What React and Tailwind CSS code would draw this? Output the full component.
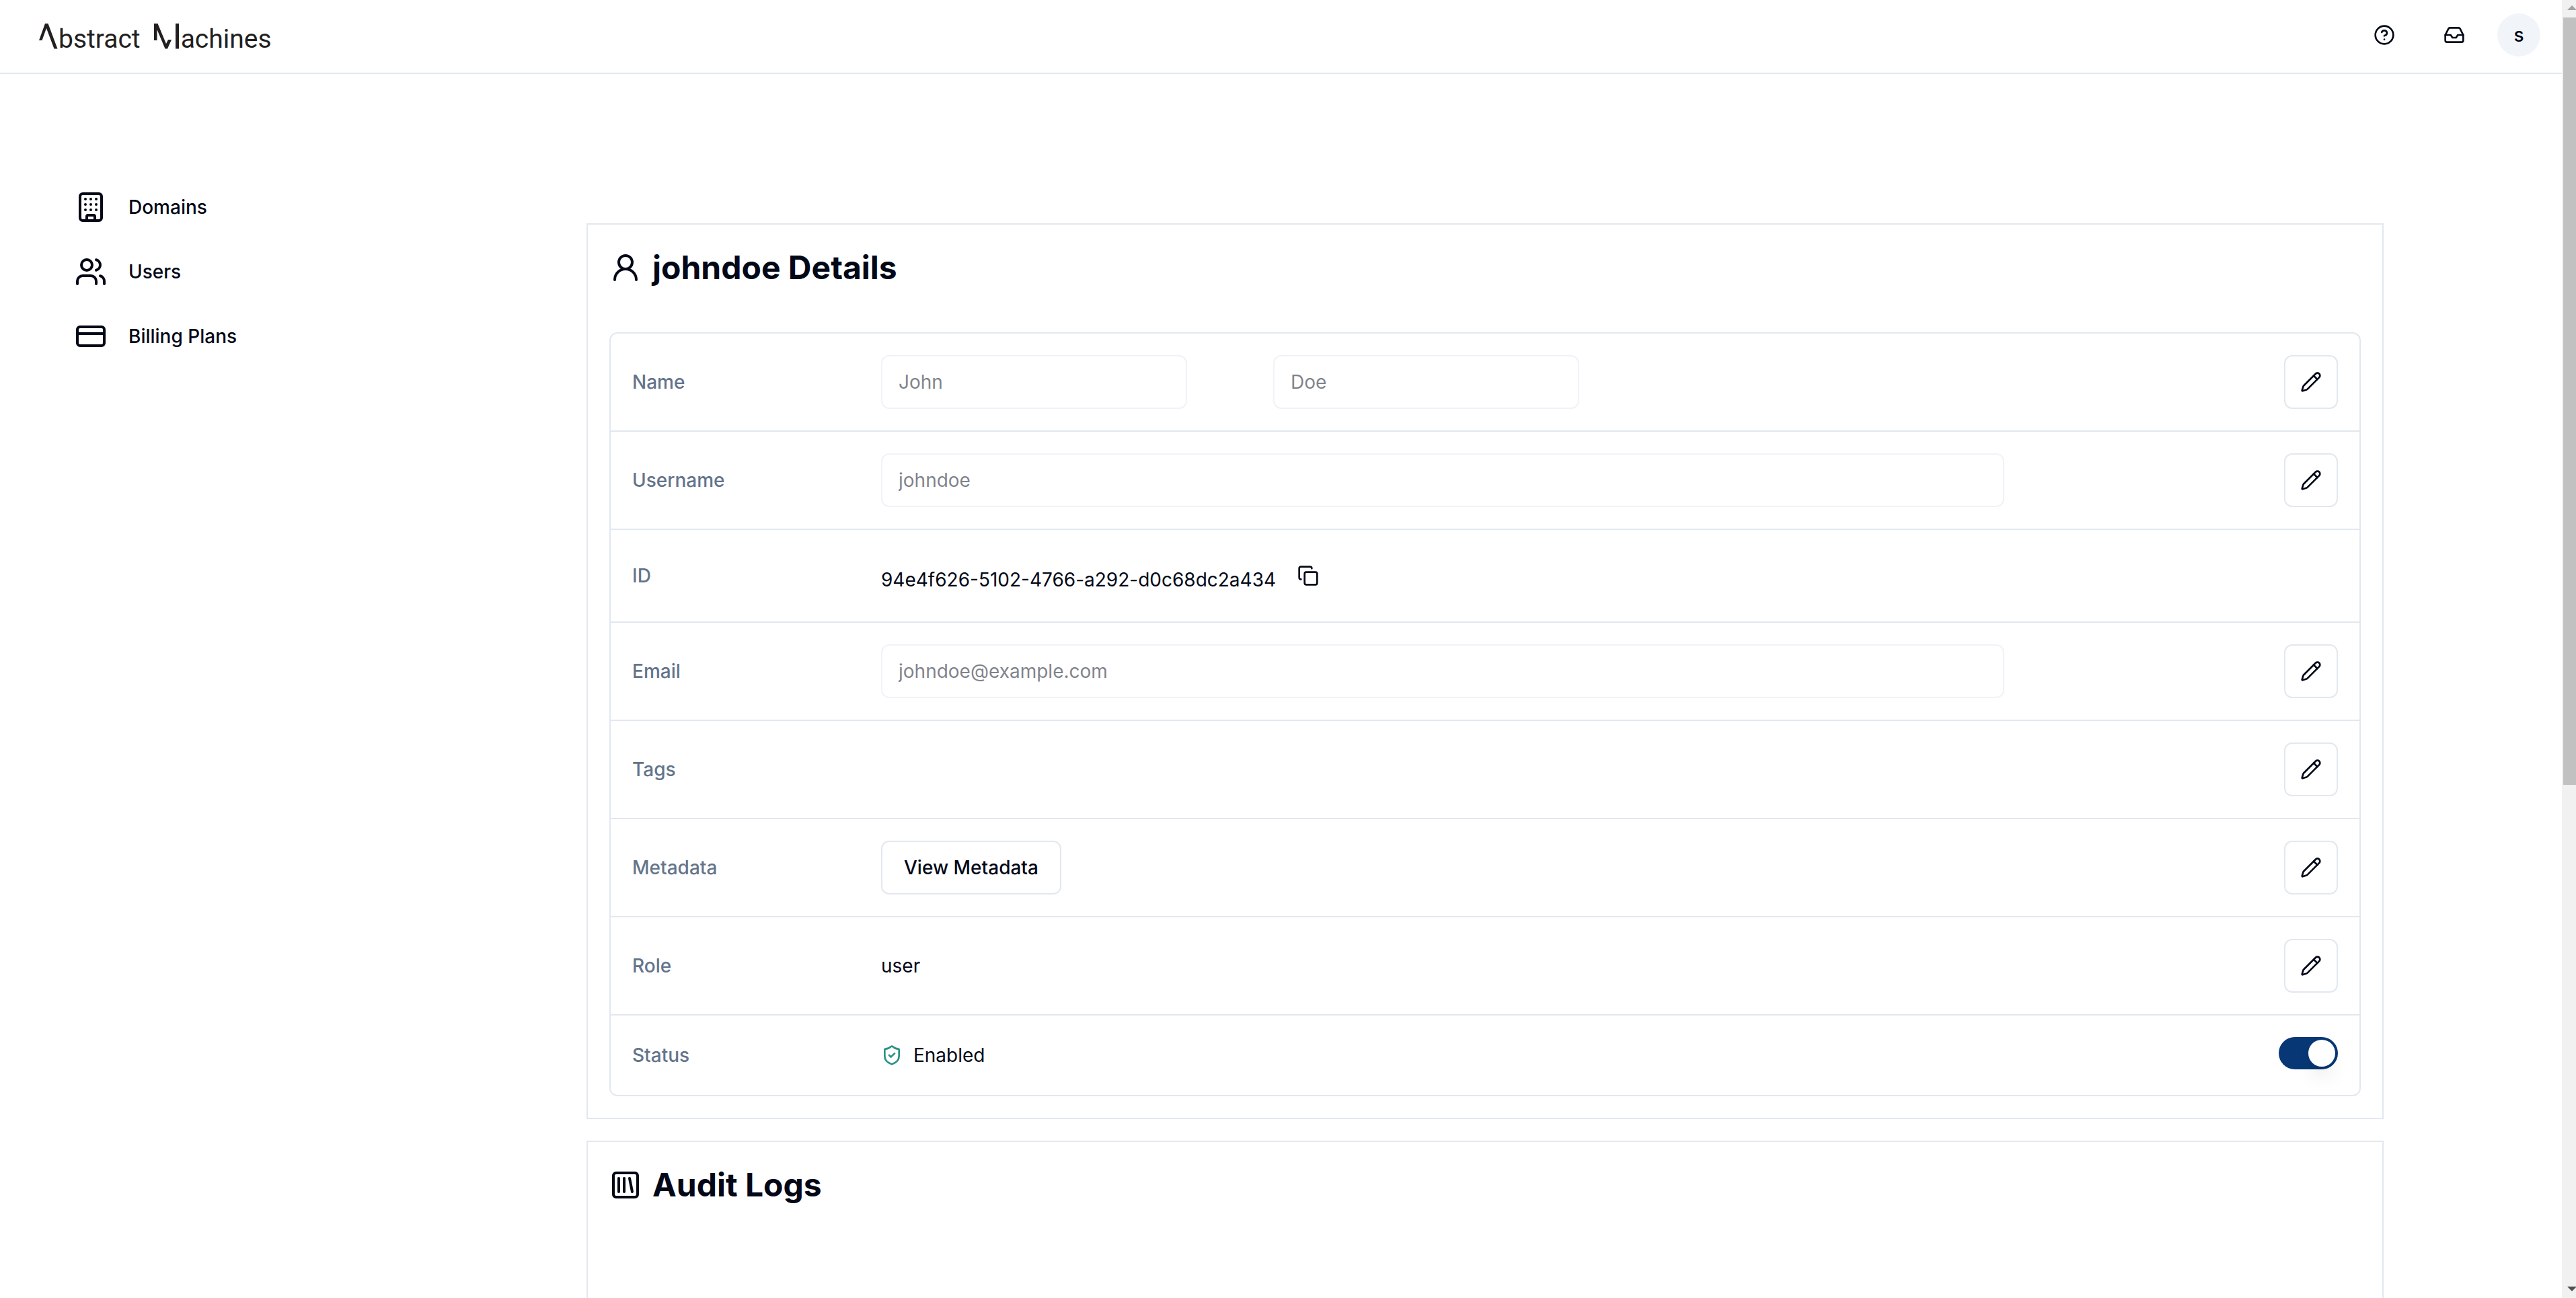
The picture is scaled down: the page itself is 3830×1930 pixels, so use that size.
import {
  Building,
  Users,
  CreditCard,
  CircleHelp,
  Inbox,
  UserRound,
  Pencil,
  Copy,
  ShieldCheck,
  SquareLibrary,
} from "lucide-react";

function Logo() {
  return (
    <a
      href="#"
      aria-label="Abstract Machines"
      className="mt-3 flex items-end font-['Roboto',sans-serif] text-[39px] leading-[46px] text-[#231f20]"
    >
      <svg width="29" height="38" viewBox="0 0 29 38" className="mb-2" aria-hidden="true">
        <path d="M0 25 9 0h4.500L27.500 37.500H22.500L11 7 4.500 25Z" fill="#231f20" />
      </svg>
      <span>bstract</span>
      <svg width="40" height="38" viewBox="0 0 40 38" className="mb-2 ml-5" aria-hidden="true">
        <path d="M0 0h5.500L18 30l3-6h5L20 37.500H16.500L4.500 9V25H0ZM32 0h5v37.500h-5Z" fill="#231f20" />
      </svg>
      <span>achines</span>
    </a>
  );
}

function IconButton({ label, children }) {
  return (
    <button type="button" aria-label={label} className="flex size-20 items-center justify-center">
      {children}
    </button>
  );
}

function EditButton({ label }) {
  return (
    <button
      type="button"
      aria-label={label}
      className="ml-auto flex size-20 items-center justify-center rounded-xl border-2 border-[#e2e8f0]"
    >
      <Pencil className="size-8" />
    </button>
  );
}

function Field({ label, value, className }) {
  return (
    <input
      type="text"
      aria-label={label}
      defaultValue={value}
      disabled
      className={"h-20 rounded-xl border-2 border-[#e2e8f0] px-6 opacity-50 " + className}
    />
  );
}

function Row({ label, children, action }) {
  return (
    <tr className="border-b-2 border-[#e2e8f0] last:border-b-0">
      <th scope="row" className="w-[370px] p-8 text-left font-medium text-[#64748b]">
        {label}
      </th>
      <td className="p-8">{children}</td>
      <td className="w-[152px] p-8 align-top">{action}</td>
    </tr>
  );
}

function CardTitle({ icon: Icon, children }) {
  return (
    <h2 className="flex items-center gap-4 p-8 text-[48px] leading-[64px] font-bold">
      <Icon className="size-12" />
      {children}
    </h2>
  );
}

const NAV = [
  { label: "Domains", icon: Building },
  { label: "Users", icon: Users },
  { label: "Billing Plans", icon: CreditCard },
];

export default function App() {
  return (
    <div className="flex h-screen overflow-hidden bg-white font-['Inter',sans-serif] text-[28px] leading-[40px] text-[#020817]">
      <div className="flex min-w-0 flex-1 flex-col">
        <header className="flex h-[110px] shrink-0 items-center justify-between border-b-2 border-[#e2e8f0] pr-8 pb-1 pl-[58px]">
          <Logo />
          <div className="flex items-center gap-6">
            <IconButton label="Help">
              <CircleHelp className="size-8" />
            </IconButton>
            <IconButton label="Inbox">
              <Inbox className="size-8" />
            </IconButton>
            <button type="button" className="size-16 rounded-full bg-[#f1f5f9] font-medium">
              s
            </button>
          </div>
        </header>

        <div className="flex min-h-0 flex-1">
          <nav className="w-[872px] shrink-0 pt-[174px] pl-[111px]">
            <ul className="flex flex-col gap-12">
              {NAV.map(({ label, icon: Icon }) => (
                <li key={label}>
                  <a href="#" className="flex h-12 items-center gap-8 font-medium">
                    <Icon className="size-12" />
                    {label}
                  </a>
                </li>
              ))}
            </ul>
          </nav>

          <main className="flex min-w-0 flex-1 flex-col gap-8 pt-[222px] pr-[265px]">
            <section className="shrink-0 border-2 border-[#e2e8f0]">
              <CardTitle icon={UserRound}>johndoe Details</CardTitle>
              <div className="p-8">
                <div className="rounded-xl border-2 border-[#e2e8f0]">
                  <table className="w-full table-fixed border-collapse">
                    <tbody>
                      <Row label="Name" action={<EditButton label="Edit name" />}>
                        <div className="flex gap-32">
                          <Field label="First name" value="John" className="w-[455px]" />
                          <Field label="Last name" value="Doe" className="w-[455px]" />
                        </div>
                      </Row>
                      <Row label="Username" action={<EditButton label="Edit username" />}>
                        <Field label="Username" value="johndoe" className="block w-[82.9%]" />
                      </Row>
                      <Row label="ID">
                        <div className="flex items-baseline">
                          <span>94e4f626-5102-4766-a292-d0c68dc2a434</span>
                          <button type="button" aria-label="Copy ID" className="flex h-[72px] items-center px-8">
                            <Copy className="size-8" />
                          </button>
                        </div>
                      </Row>
                      <Row label="Email" action={<EditButton label="Edit email" />}>
                        <Field label="Email" value="johndoe@example.com" className="block w-[82.9%]" />
                      </Row>
                      <Row label="Tags" action={<EditButton label="Edit tags" />} />
                      <Row label="Metadata" action={<EditButton label="Edit metadata" />}>
                        <button
                          type="button"
                          className="block h-20 rounded-xl border-2 border-[#e2e8f0] px-8 font-medium"
                        >
                          View Metadata
                        </button>
                      </Row>
                      <Row label="Role" action={<EditButton label="Edit role" />}>
                        user
                      </Row>
                      <Row
                        label="Status"
                        action={
                          <div className="h-[54px]">
                            <button
                              type="button"
                              role="switch"
                              aria-checked="true"
                              aria-label="Status"
                              className="flex h-12 w-[88px] items-center justify-end rounded-full bg-[#083775] p-1"
                            >
                              <span className="size-10 rounded-full bg-white shadow-[0_20px_30px_-6px_rgba(0,0,0,0.1),0_8px_12px_-8px_rgba(0,0,0,0.1)]" />
                            </button>
                          </div>
                        }
                      >
                        <div className="flex items-center gap-4">
                          <ShieldCheck className="size-8 text-[#2a9187]" />
                          Enabled
                        </div>
                      </Row>
                    </tbody>
                  </table>
                </div>
              </div>
            </section>

            <section className="min-h-[600px] shrink-0 border-2 border-[#e2e8f0]">
              <CardTitle icon={SquareLibrary}>Audit Logs</CardTitle>
            </section>
          </main>
        </div>
      </div>

      <div className="flex w-[21px] shrink-0 flex-col overflow-hidden bg-[#f1f1f1] pl-[2px]" aria-hidden="true">
        <svg width="26" height="26" viewBox="0 0 26 26" className="shrink-0">
          <path d="M6 15 13 8l7 7Z" fill="#a3a3a3" />
        </svg>
        <div className="h-[1141px] w-full bg-[#c1c1c1]" />
        <svg width="26" height="26" viewBox="0 0 26 26" className="mt-auto shrink-0">
          <path d="M6 9h14l-7 7Z" fill="#505050" />
        </svg>
      </div>
    </div>
  );
}
